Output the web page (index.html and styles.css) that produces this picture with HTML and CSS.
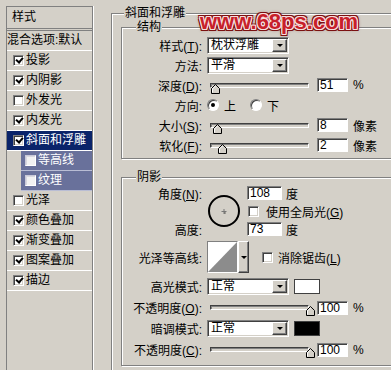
FILE: index.html
```html
<!DOCTYPE html>
<html>
<head>
<meta charset="utf-8" />
<title>图层样式 - 斜面和浮雕</title>
<link rel="stylesheet" href="styles.css">
</head>
<body>
<div class="sidebar">
  <div class="side-head">样式</div>
  <div class="side-blend">混合选项:默认</div>
  <div class="side-item"><span class="cb on"></span>投影</div>
  <div class="side-item"><span class="cb on"></span>内阴影</div>
  <div class="side-item"><span class="cb"></span>外发光</div>
  <div class="side-item"><span class="cb on"></span>内发光</div>
  <div class="side-item active"><span class="cb on"></span>斜面和浮雕</div>
  <div class="side-item sub"><span class="cb"></span>等高线</div>
  <div class="side-item sub"><span class="cb"></span>纹理</div>
  <div class="side-item"><span class="cb"></span>光泽</div>
  <div class="side-item"><span class="cb on"></span>颜色叠加</div>
  <div class="side-item"><span class="cb on"></span>渐变叠加</div>
  <div class="side-item"><span class="cb on"></span>图案叠加</div>
  <div class="side-item"><span class="cb on"></span>描边</div>
</div>

<div class="main">
  <fieldset class="group outer">
    <legend>斜面和浮雕</legend>

    <fieldset class="group inner">
      <legend>结构</legend>
      <div class="rows">
        <div class="row"><span class="lbl">样式(<u>T</u>):</span><div class="select"><span class="val">枕状浮雕</span><span class="drop"></span></div></div>
        <div class="row"><span class="lbl">方法:</span><div class="select"><span class="val">平滑</span><span class="drop"></span></div></div>
        <div class="row">
          <span class="lbl">深度(<u>D</u>):</span>
          <div class="slider"><svg class="thumb" style="left:0px" width="9" height="10" viewBox="0 0 9 10"><path d="M0.5 9.5V4.5L4.5 0.5L8.5 4.5V9.5Z" fill="#d4d0c8" stroke="#000"/><path d="M1.5 8.5V4.9L4.5 1.9" fill="none" stroke="#fff"/></svg></div>
          <span class="num">51</span><span class="unit">%</span>
        </div>
        <div class="row"><span class="lbl">方向:</span><span class="radio on"></span><span class="opt">上</span><span class="radio second"></span><span class="opt">下</span></div>
        <div class="row">
          <span class="lbl">大小(<u>S</u>):</span>
          <div class="slider"><svg class="thumb" style="left:2px" width="9" height="10" viewBox="0 0 9 10"><path d="M0.5 9.5V4.5L4.5 0.5L8.5 4.5V9.5Z" fill="#d4d0c8" stroke="#000"/><path d="M1.5 8.5V4.9L4.5 1.9" fill="none" stroke="#fff"/></svg></div>
          <span class="num">8</span><span class="unit">像素</span>
        </div>
        <div class="row">
          <span class="lbl">软化(<u>F</u>):</span>
          <div class="slider"><svg class="thumb" style="left:7px" width="9" height="10" viewBox="0 0 9 10"><path d="M0.5 9.5V4.5L4.5 0.5L8.5 4.5V9.5Z" fill="#d4d0c8" stroke="#000"/><path d="M1.5 8.5V4.9L4.5 1.9" fill="none" stroke="#fff"/></svg></div>
          <span class="num">2</span><span class="unit">像素</span>
        </div>
      </div>
    </fieldset>

    <fieldset class="group inner shade">
      <legend>阴影</legend>
      <div class="rows tail">
        <div class="angle">
          <div class="angle-lbls"><span>角度(<u>N</u>):</span><span></span><span>高度:</span></div>
          <svg class="dial" width="34" height="34" viewBox="0 0 34 34">
            <circle cx="17" cy="17" r="15" fill="none" stroke="#000" stroke-width="2"/>
            <path d="M14.5 17.5h5M17 15v5" stroke="#777" stroke-width="1"/>
            <path d="M17.5 18.5h1v1h-1z" fill="#000"/>
          </svg>
          <div class="angle-ctls">
            <div class="arow"><span class="num wide">108</span><span class="unit deg">度</span></div>
            <div class="arow"><span class="cb light"></span><span class="opt">使用全局光(<u>G</u>)</span></div>
            <div class="arow"><span class="num wide">73</span><span class="unit deg">度</span></div>
          </div>
        </div>

        <div class="row contour-row">
          <span class="lbl">光泽等高线:</span>
          <div class="contour">
            <svg class="curve" width="31" height="32" viewBox="0 0 31 32"><rect x="0" y="0" width="31" height="32" fill="#fff"/><path d="M0 32L31 0V32Z" fill="#8c8c8c"/></svg>
            <span class="drop tall"></span>
          </div>
          <span class="cb light far"></span><span class="opt">消除锯齿(<u>L</u>)</span>
        </div>

        <div class="row tall-row"><span class="lbl">高光模式:</span><div class="select"><span class="val">正常</span><span class="drop"></span></div><span class="swatch white"></span></div>
        <div class="row tall-row">
          <span class="lbl">不透明度(<u>O</u>):</span>
          <div class="slider"><svg class="thumb" style="left:95px" width="9" height="10" viewBox="0 0 9 10"><path d="M0.5 9.5V4.5L4.5 0.5L8.5 4.5V9.5Z" fill="#d4d0c8" stroke="#000"/><path d="M1.5 8.5V4.9L4.5 1.9" fill="none" stroke="#fff"/></svg></div>
          <span class="num">100</span><span class="unit">%</span>
        </div>
        <div class="row tall-row"><span class="lbl">暗调模式:</span><div class="select"><span class="val">正常</span><span class="drop"></span></div><span class="swatch black"></span></div>
        <div class="row tall-row">
          <span class="lbl">不透明度(<u>C</u>):</span>
          <div class="slider"><svg class="thumb" style="left:95px" width="9" height="10" viewBox="0 0 9 10"><path d="M0.5 9.5V4.5L4.5 0.5L8.5 4.5V9.5Z" fill="#d4d0c8" stroke="#000"/><path d="M1.5 8.5V4.9L4.5 1.9" fill="none" stroke="#fff"/></svg></div>
          <span class="num">100</span><span class="unit">%</span>
        </div>
      </div>
    </fieldset>
  </fieldset>
</div>

<div class="watermark">www.68ps.com</div>
</body>
</html>
```

FILE: styles.css
```css
* {
  box-sizing: border-box;
}
html, body {
  margin: 0;
}
body {
  background: #d4d0c8;
  color: #000;
  display: flex;
  font: 12px "Liberation Sans", "Noto Sans CJK SC", sans-serif;
  height: 370px;
  overflow: hidden;
  position: relative;
  width: 391px;
}
u {
  text-decoration: underline;
}

/* left list of effects */
.sidebar {
  border: 1px solid #808080;
  border-bottom: 0;
  box-shadow: 1px 0 0 #fff;
  flex: none;
  margin: 6px 0 0 6px;
  width: 87px;
}
.side-head {
  border-bottom: 3px double #808080;
  height: 24px;
  line-height: 21px;
  padding-left: 5px;
}
.side-blend {
  border-bottom: 1px solid #fff;
  height: 20px;
  line-height: 19px;
  white-space: nowrap;
}
.side-item {
  align-items: center;
  border-bottom: 1px solid #fff;
  display: flex;
  gap: 2px;
  height: 20px;
  line-height: 19px;
  padding-left: 6px;
  white-space: nowrap;
}
.side-item.active {
  background: #0a246a;
  color: #fff;
}
.side-item.sub {
  background: #69719b;
  border-bottom-color: #b9bdd4;
  color: #fff;
  margin-left: 14px;
  padding-left: 4px;
}

/* checkbox */
.cb {
  background: #fff;
  border: 1px solid;
  border-color: #808080 #fff #fff #808080;
  box-shadow: inset 1px 1px 0 #404040, inset -1px -1px 0 #d4d0c8;
  display: inline-block;
  flex: none;
  height: 11px;
  position: relative;
  width: 11px;
}
.cb.on::after {
  border: solid #000;
  border-width: 0 2px 2px 0;
  content: "";
  height: 5px;
  left: 3px;
  position: absolute;
  top: 0;
  transform: rotate(40deg);
  width: 3px;
}
.sub .cb {
  background: #f2f2f2;
  border-color: #c8c8d8 #fff #fff #c8c8d8;
  box-shadow: inset 1px 1px 0 #d8d8e0;
}

/* right side */
.main {
  flex: none;
  height: 364px;
  margin: 6px 0 0 18px;
  overflow: hidden;
  width: 280px;
}
.group {
  border: 1px solid #808080;
  box-shadow: inset 1px 1px 0 #fff, 1px 1px 0 #fff;
  margin: 0;
  min-width: 0;
  padding: 0;
}
.group > legend {
  background: #d4d0c8;
  line-height: 14px;
  margin-left: 12px;
  padding: 0 1px;
}
.outer {
  height: 380px;
  width: 300px;
}
.inner {
  margin: 0 0 0 9px;
}
.inner > legend {
  margin-left: 14px;
}
.shade {
  margin-top: 11px;
}
.rows {
  padding: 1px 0 3px;
}
.rows.tail {
  padding: 0 0 5px;
}
.row {
  align-items: center;
  display: flex;
  height: 20px;
  white-space: nowrap;
}
.tall-row {
  height: 21px;
}
.lbl {
  flex: none;
  text-align: right;
  width: 80px;
}

/* drop-down list */
.select {
  background: #fff;
  border: 1px solid;
  border-color: #808080 #fff #fff #808080;
  box-shadow: inset 1px 1px 0 #404040, inset -1px -1px 0 #d4d0c8;
  display: flex;
  flex: none;
  height: 17px;
  margin-left: 5px;
  padding: 1px;
  width: 82px;
}
.select .val {
  flex: 1;
  line-height: 13px;
  padding-left: 2px;
}
.drop {
  align-items: center;
  background: #d4d0c8;
  border: 1px solid;
  border-color: #fff #404040 #404040 #fff;
  box-shadow: inset -1px -1px 0 #808080;
  display: flex;
  flex: none;
  height: 13px;
  justify-content: center;
  width: 15px;
}
.drop::after {
  border-left: 3px solid transparent;
  border-right: 3px solid transparent;
  border-top: 3px solid #000;
  content: "";
}
.drop.tall {
  height: 32px;
  width: 11px;
}

/* slider */
.slider {
  background: #d4d0c8;
  border: 1px solid;
  border-color: #404040 #fff #fff #404040;
  box-shadow: inset 1px 1px 0 #808080;
  flex: none;
  height: 5px;
  margin-left: 8px;
  position: relative;
  width: 99px;
}
.thumb {
  display: block;
  position: absolute;
  top: 0;
}

/* number field */
.num {
  background: #fff;
  border: 1px solid;
  border-color: #808080 #fff #fff #808080;
  box-shadow: inset 1px 1px 0 #404040;
  flex: none;
  height: 14px;
  line-height: 12px;
  margin-left: 8px;
  padding-left: 2px;
  width: 31px;
}
.num.wide {
  margin-left: 0;
  width: 35px;
}
.unit {
  margin-left: 5px;
}
.unit.deg {
  margin-left: 4px;
}

/* radio */
.radio {
  background: #fff;
  border: 1px solid;
  border-color: #808080 #fff #fff #808080;
  border-radius: 50%;
  box-shadow: inset 1px 1px 0 #404040;
  flex: none;
  height: 12px;
  margin-left: 5px;
  position: relative;
  width: 12px;
}
.radio.on::after {
  background: #000;
  border-radius: 50%;
  content: "";
  height: 4px;
  left: 3px;
  position: absolute;
  top: 3px;
  width: 4px;
}
.radio.second {
  margin-left: 14px;
}
.opt {
  margin-left: 5px;
}

/* angle block */
.angle {
  align-items: center;
  display: flex;
  height: 54px;
}
.angle-lbls, .angle-ctls {
  align-items: center;
  display: grid;
  grid-template-rows: repeat(3, 18px);
}
.angle-lbls {
  flex: none;
  text-align: right;
  width: 80px;
}
.dial {
  display: block;
  flex: none;
  margin-left: 5px;
}
.angle-ctls {
  margin-left: 6px;
  white-space: nowrap;
}
.arow {
  align-items: center;
  display: flex;
}
.arow .cb {
  margin-left: 1px;
}
.arow .opt {
  margin-left: 7px;
}

/* contour */
.contour-row {
  height: 32px;
  margin-top: 3px;
}
.contour {
  display: flex;
  flex: none;
  margin-left: 5px;
}
.curve {
  border: 1px solid;
  border-color: #808080 #fff #fff #808080;
  display: block;
}
.cb.far {
  margin-left: 13px;
}
.tall-row:nth-child(3) {
  margin-top: 3px;
}

/* colour swatches */
.swatch {
  border: 1px solid #404040;
  flex: none;
  height: 15px;
  margin-left: 5px;
  width: 26px;
}
.swatch.white {
  background: #fff;
}
.swatch.black {
  background: #000;
}

/* site stamp over the dialog */
.watermark {
  color: #c8202a;
  font: bold 22px "Liberation Sans", sans-serif;
  left: 200px;
  line-height: 24px;
  position: absolute;
  text-shadow: 1px 0 #f6dede, -1px 0 #f6dede, 0 1px #f6dede, 0 -1px #f6dede,
    1px 1px #f6dede, -1px -1px #f6dede, 1px -1px #f6dede, -1px 1px #f6dede,
    2px 0 #7a1010, -2px 0 #7a1010, 0 2px #7a1010, 0 -2px #7a1010,
    2px 2px #7a1010, -2px -2px #7a1010, 2px -2px #7a1010, -2px 2px #7a1010,
    0 0 4px #7a1010;
  top: 10px;
}
```
